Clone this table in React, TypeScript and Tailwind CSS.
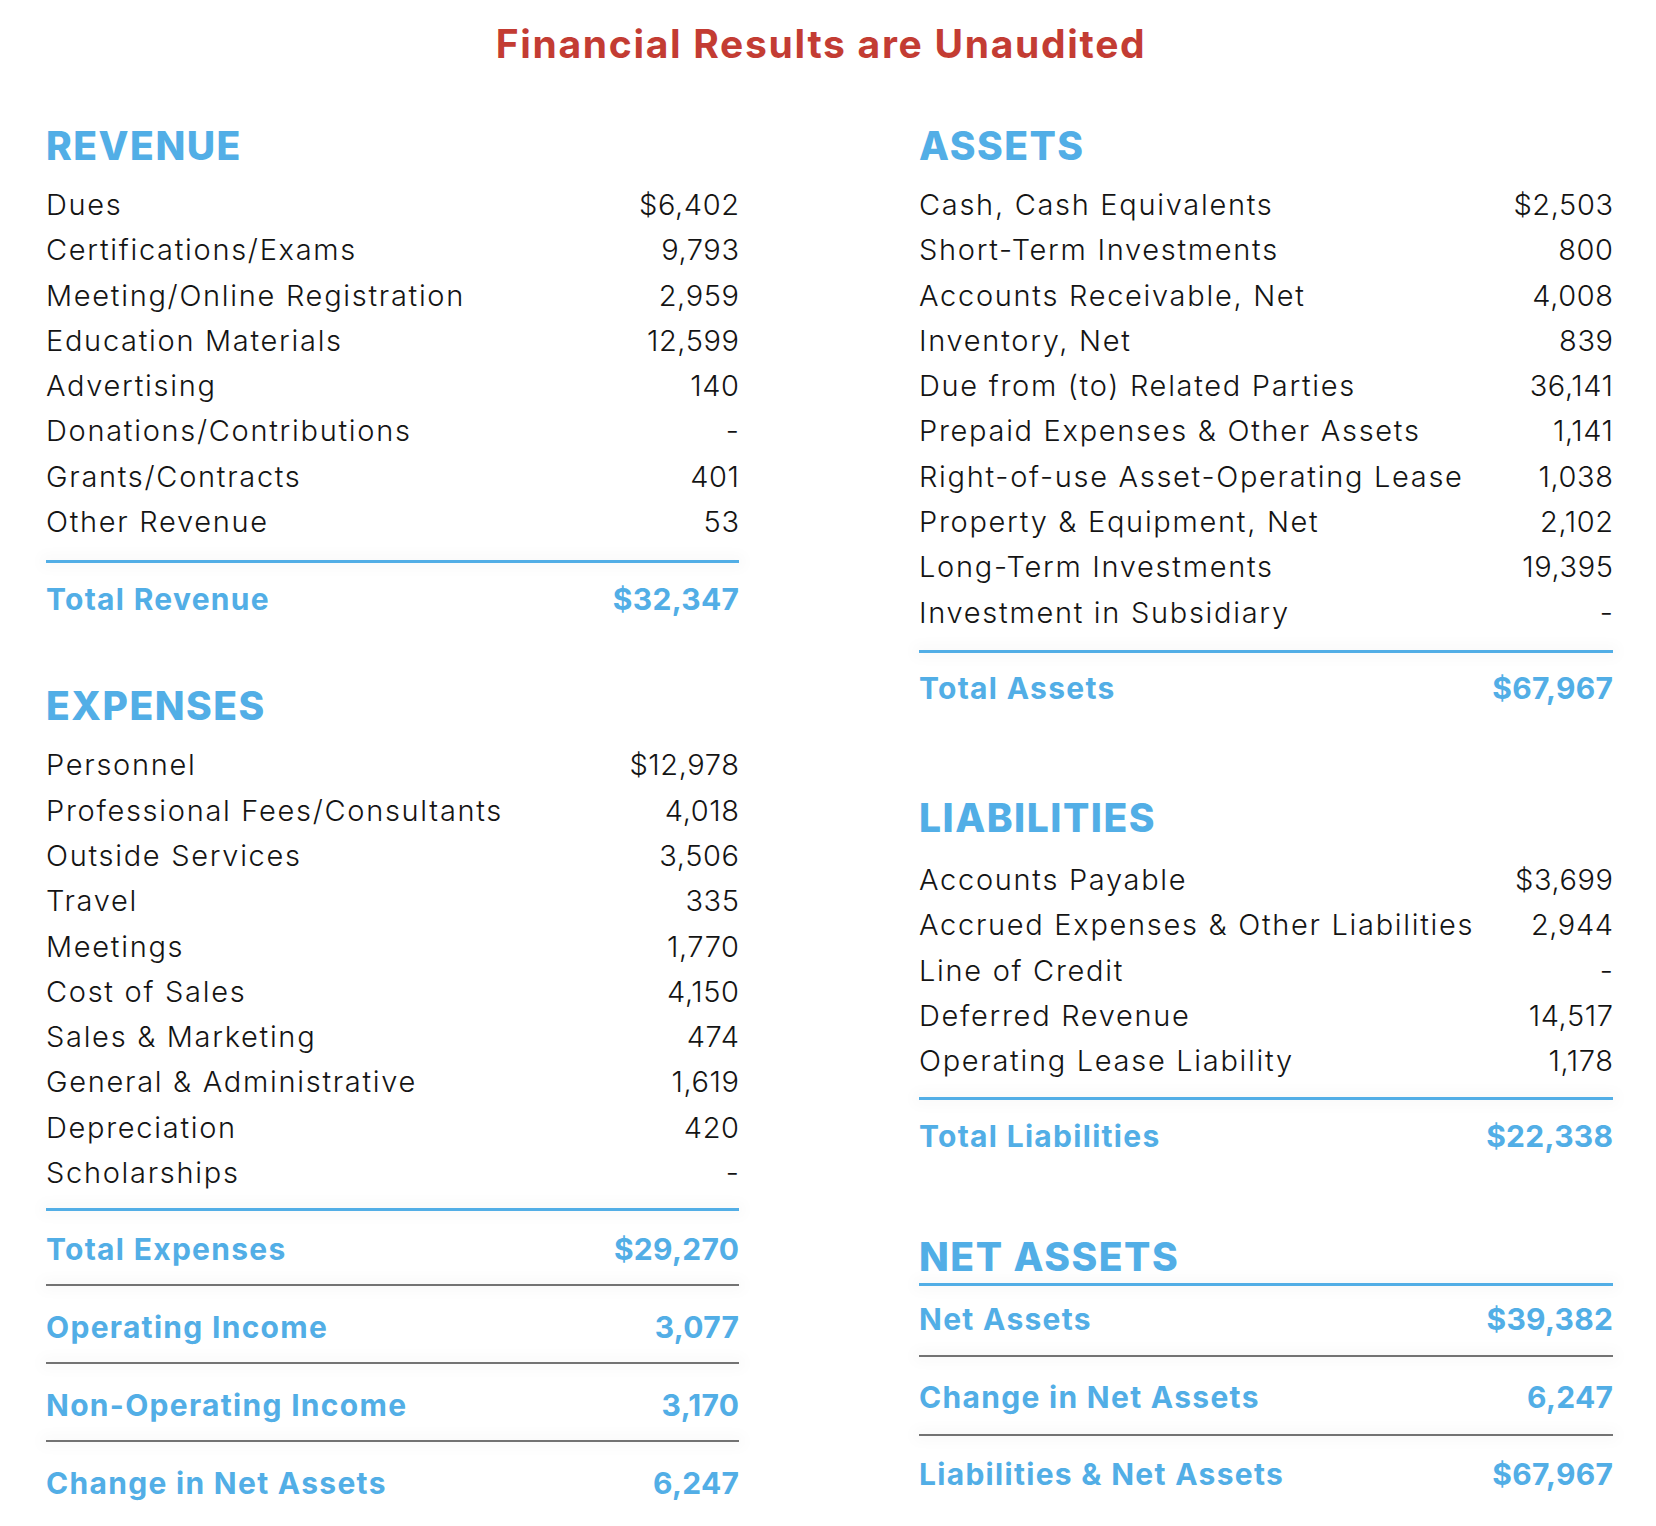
import React from "react";

type Row = { label: string; value: string };

const revenue: Row[] = [
  { label: "Dues", value: "$6,402" },
  { label: "Certifications/Exams", value: "9,793" },
  { label: "Meeting/Online Registration", value: "2,959" },
  { label: "Education Materials", value: "12,599" },
  { label: "Advertising", value: "140" },
  { label: "Donations/Contributions", value: "-" },
  { label: "Grants/Contracts", value: "401" },
  { label: "Other Revenue", value: "53" },
];

const expenses: Row[] = [
  { label: "Personnel", value: "$12,978" },
  { label: "Professional Fees/Consultants", value: "4,018" },
  { label: "Outside Services", value: "3,506" },
  { label: "Travel", value: "335" },
  { label: "Meetings", value: "1,770" },
  { label: "Cost of Sales", value: "4,150" },
  { label: "Sales & Marketing", value: "474" },
  { label: "General & Administrative", value: "1,619" },
  { label: "Depreciation", value: "420" },
  { label: "Scholarships", value: "-" },
];

const assets: Row[] = [
  { label: "Cash, Cash Equivalents", value: "$2,503" },
  { label: "Short-Term Investments", value: "800" },
  { label: "Accounts Receivable, Net", value: "4,008" },
  { label: "Inventory, Net", value: "839" },
  { label: "Due from (to) Related Parties", value: "36,141" },
  { label: "Prepaid Expenses & Other Assets", value: "1,141" },
  { label: "Right-of-use Asset-Operating Lease", value: "1,038" },
  { label: "Property & Equipment, Net", value: "2,102" },
  { label: "Long-Term Investments", value: "19,395" },
  { label: "Investment in Subsidiary", value: "-" },
];

const liabilities: Row[] = [
  { label: "Accounts Payable", value: "$3,699" },
  { label: "Accrued Expenses & Other Liabilities", value: "2,944" },
  { label: "Line of Credit", value: "-" },
  { label: "Deferred Revenue", value: "14,517" },
  { label: "Operating Lease Liability", value: "1,178" },
];

function Heading({ children, className = "" }: { children: React.ReactNode; className?: string }) {
  return (
    <h2 className={`h-[48px] leading-[48px] text-[39px] font-extrabold text-[#52aee6] tracking-[1.5px] ${className}`}>
      {children}
    </h2>
  );
}

function Lines({ rows, className = "" }: { rows: Row[]; className?: string }) {
  return (
    <div className={className}>
      {rows.map((r) => (
        <div key={r.label} className="flex justify-between h-[45.3px] leading-[45.3px] text-[29px] font-light text-[#141414]">
          <span className="tracking-[1.7px]">{r.label}</span>
          <span className="tracking-[0.6px] -mr-[0.6px]">{r.value}</span>
        </div>
      ))}
    </div>
  );
}

function BlueRule({ className = "" }: { className?: string }) {
  return <div className={`h-[3px] bg-[#52aee6] shadow-[0_0_14px_6px_rgba(0,0,0,0.025)] ${className}`} />;
}

function GrayRule({ className = "" }: { className?: string }) {
  return <div className={`h-[2px] bg-[#737373] shadow-[0_0_14px_6px_rgba(0,0,0,0.025)] ${className}`} />;
}

function Total({ label, value, className = "" }: { label: string; value: string; className?: string }) {
  return (
    <div className={`flex justify-between h-[48px] leading-[48px] text-[30px] font-bold text-[#52aee6] ${className}`}>
      <span className="tracking-[1.3px]">{label}</span>
      <span className="tracking-[0.3px] -mr-[0.3px]">{value}</span>
    </div>
  );
}

export default function App() {
  return (
    <div className="w-[1656px] min-h-[1526px] bg-white font-['Inter',sans-serif]">
      <h1 className="pt-[20px] h-[68px] leading-[48px] text-center text-[39px] font-bold text-[#c33c33] pr-[14px] tracking-[1.7px]">
        Financial Results are Unaudited
      </h1>

      <div className="grid grid-cols-[693px_694px] gap-x-[180px] pl-[46px] mt-[54px]">
        {/* Left column */}
        <div>
          <Heading>REVENUE</Heading>
          <Lines rows={revenue} className="mt-[12px]" />
          <BlueRule className="mt-[16px]" />
          <Total label="Total Revenue" value="$32,347" className="mt-[12px]" />

          <Heading className="mt-[59px]">EXPENSES</Heading>
          <Lines rows={expenses} className="mt-[12px]" />
          <BlueRule className="mt-[13px]" />
          <Total label="Total Expenses" value="$29,270" className="mt-[14px]" />
          <GrayRule className="mt-[11px]" />
          <Total label="Operating Income" value="3,077" className="mt-[17px]" />
          <GrayRule className="mt-[11px]" />
          <Total label="Non-Operating Income" value="3,170" className="mt-[17px]" />
          <GrayRule className="mt-[11px]" />
          <Total label="Change in Net Assets" value="6,247" className="mt-[17px]" />
        </div>

        {/* Right column */}
        <div>
          <Heading>ASSETS</Heading>
          <Lines rows={assets} className="mt-[12px]" />
          <BlueRule className="mt-[15px]" />
          <Total label="Total Assets" value="$67,967" className="mt-[11px]" />

          <Heading className="mt-[82px]">LIABILITIES</Heading>
          <Lines rows={liabilities} className="mt-[15px]" />
          <BlueRule className="mt-[14px]" />
          <Total label="Total Liabilities" value="$22,338" className="mt-[12px]" />

          <Heading className="mt-[73px]">NET ASSETS</Heading>
          <BlueRule className="mt-[2px]" />
          <Total label="Net Assets" value="$39,382" className="mt-[9px]" />
          <GrayRule className="mt-[12px]" />
          <Total label="Change in Net Assets" value="6,247" className="mt-[16px]" />
          <GrayRule className="mt-[13px]" />
          <Total label="Liabilities & Net Assets" value="$67,967" className="mt-[14px]" />
        </div>
      </div>
    </div>
  );
}
